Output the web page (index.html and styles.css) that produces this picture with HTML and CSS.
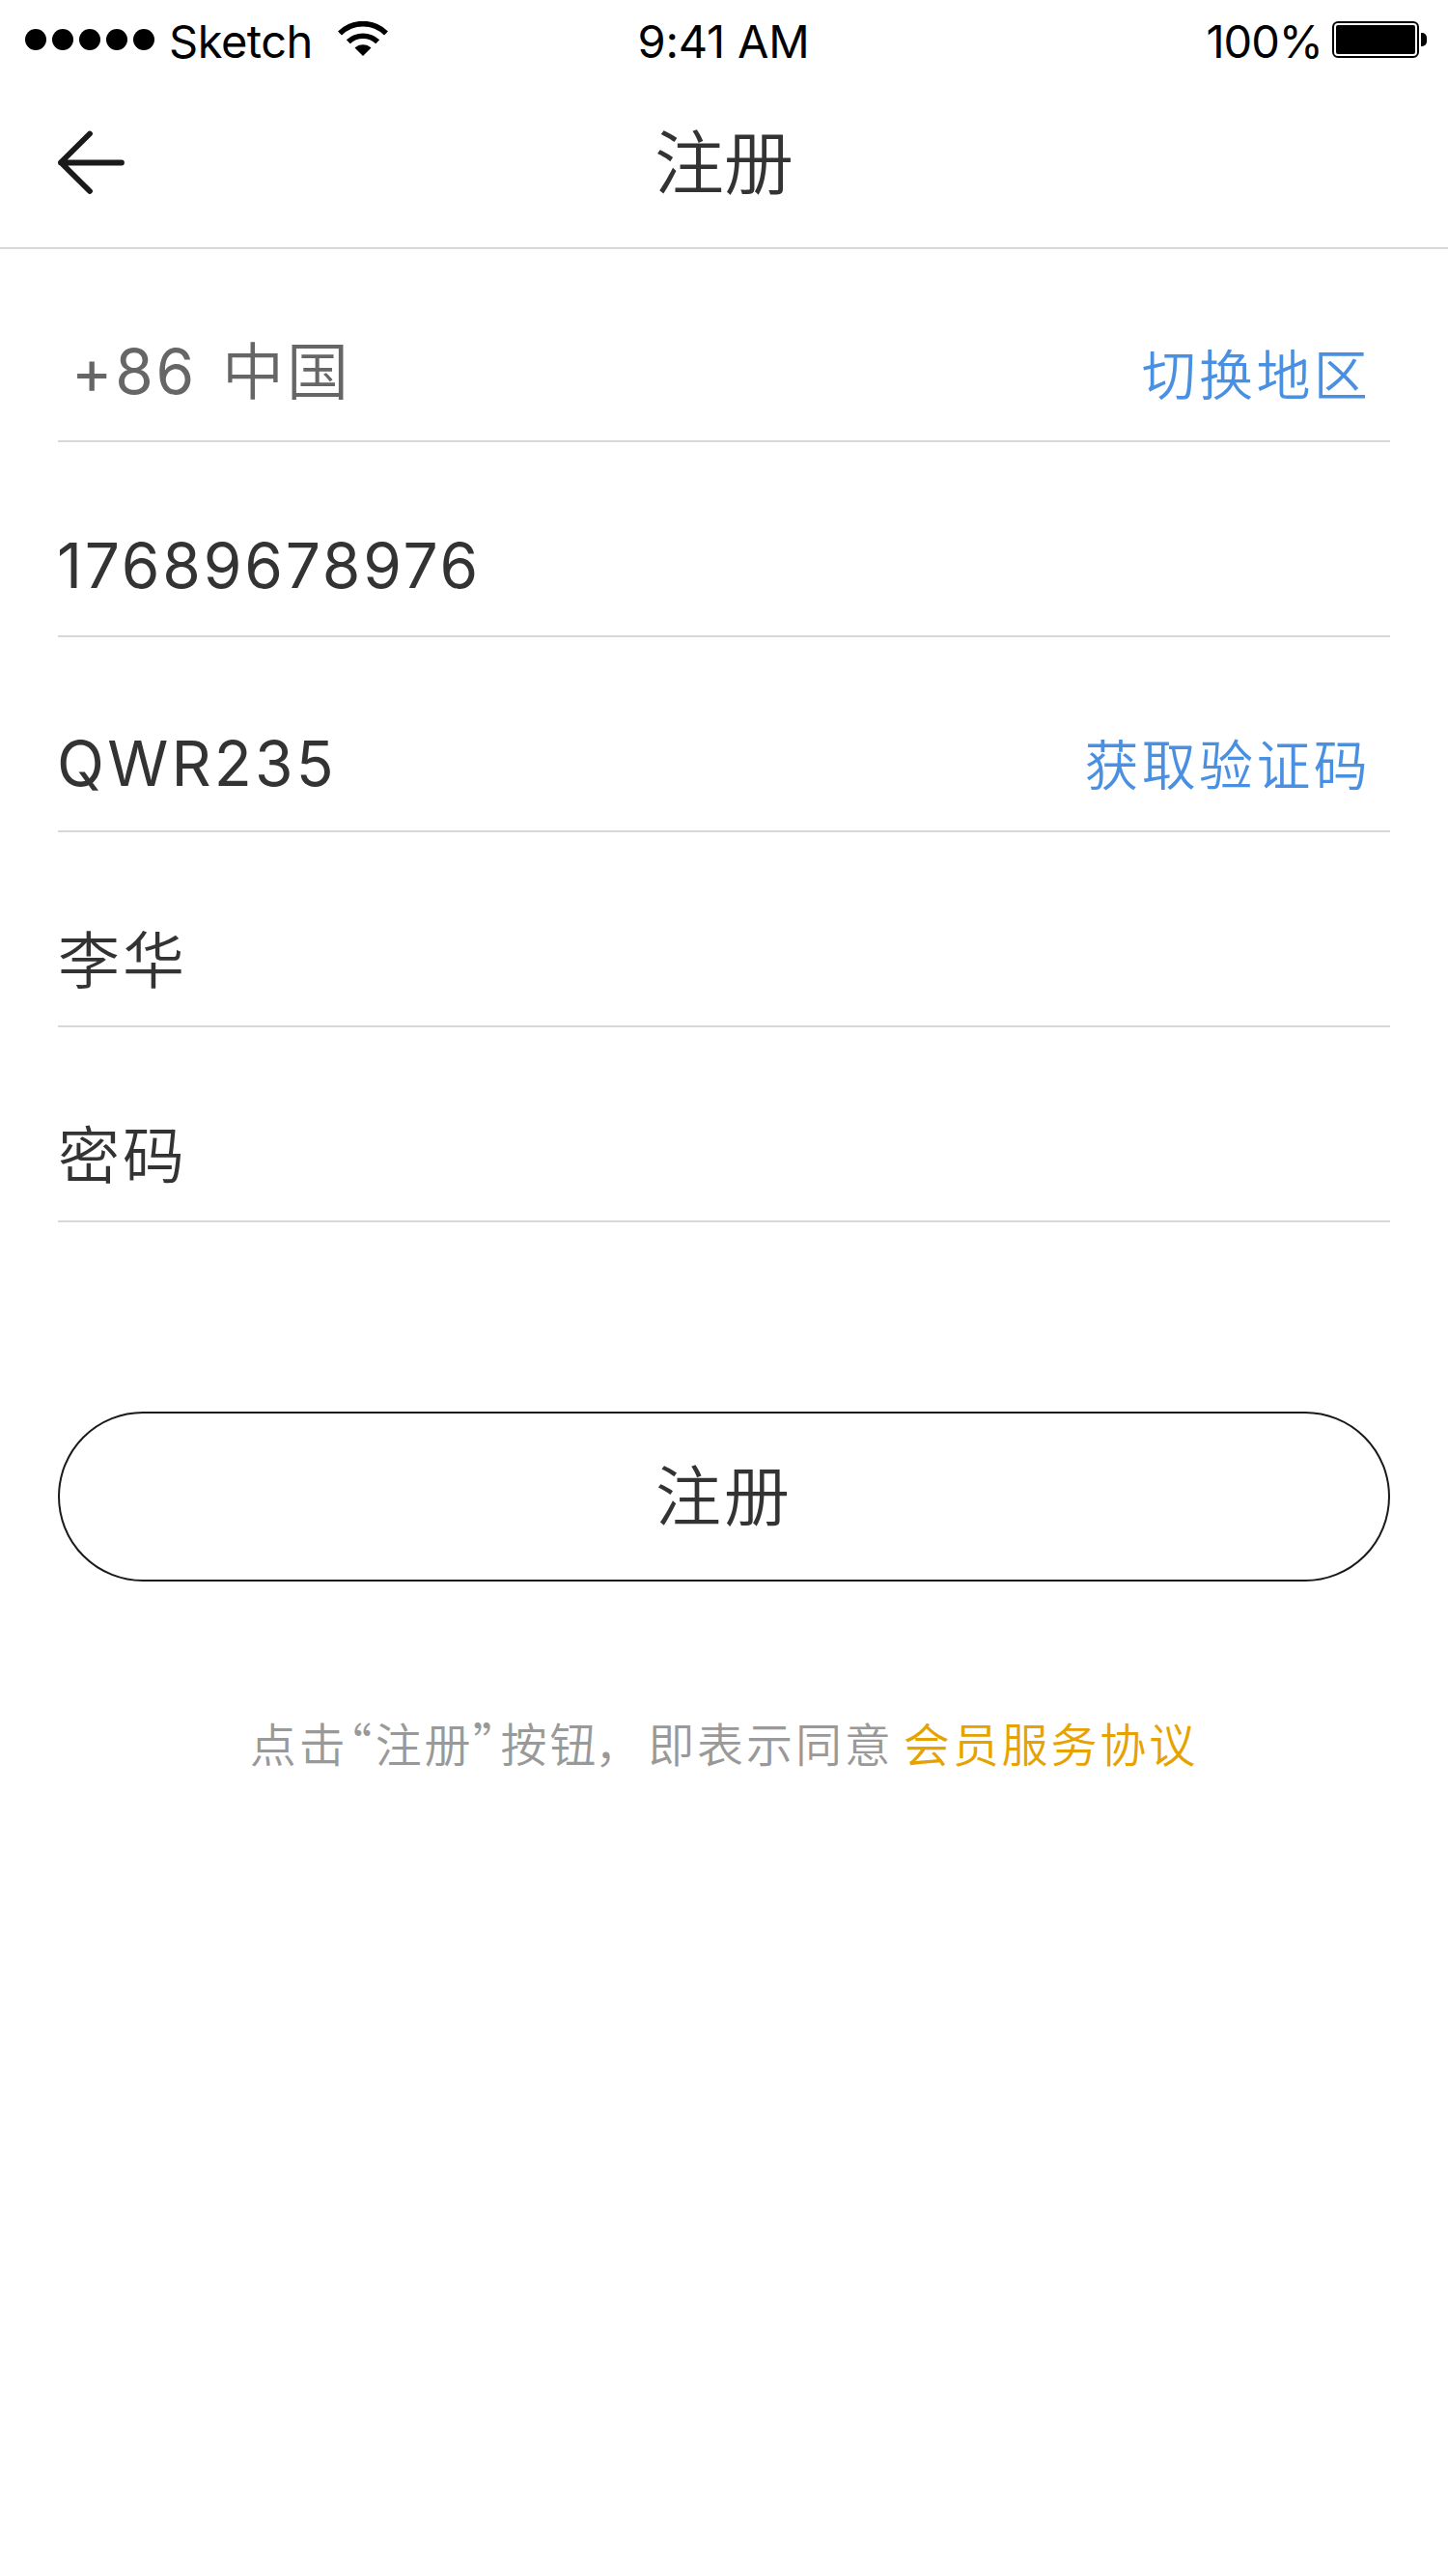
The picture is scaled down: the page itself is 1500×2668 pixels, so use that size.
FILE: index.html
```html
<!DOCTYPE html>
<html lang="zh-CN">
<head>
<meta charset="utf-8">
<title>注册</title>
<link rel="stylesheet" href="styles.css">
</head>
<body>
<header class="status">
  <div class="status-left">
    <svg class="signal" width="134" height="22" viewBox="0 0 134 22"><circle cx="11" cy="11" r="11"/><circle cx="39" cy="11" r="11"/><circle cx="67" cy="11" r="11"/><circle cx="95" cy="11" r="11"/><circle cx="123" cy="11" r="11"/></svg>
    <span class="carrier">Sketch</span>
    <svg class="wifi" width="52" height="36" viewBox="0 0 52 36"><path d="M2 12.5A34 34 0 0 1 50 12.5" fill="none" stroke="#000" stroke-width="5.6"/><path d="M10.8 21.3A22 22 0 0 1 41.2 21.3" fill="none" stroke="#000" stroke-width="5.6"/><path d="M17.5 27.5A12.5 12.5 0 0 1 34.5 27.5L26 36Z"/></svg>
  </div>
  <span class="clock">9:41 AM</span>
  <div class="status-right">
    <span class="charge">100%</span>
    <svg class="battery" width="98" height="38" viewBox="0 0 98 38"><rect x="1" y="1" width="88" height="36" rx="5" fill="none" stroke="#000" stroke-width="2"/><rect x="4" y="4" width="82" height="30" rx="2"/><path d="M92 12h1a5 5 0 0 1 5 5v4a5 5 0 0 1-5 5h-1z"/></svg>
  </div>
</header>
<nav class="nav">
  <svg class="back" width="70" height="66" viewBox="0 0 70 66"><path d="M33 3.5L3 33.2L33 63M3 33.5H66" fill="none" stroke="#1a1a1a" stroke-width="5.8" stroke-linecap="round" stroke-linejoin="round"/></svg>
  <h1 class="title">注册</h1>
  <span></span>
</nav>
<main class="form">
  <div class="field first"><span class="region"><span class="code">+86</span><span class="country">中国</span></span><a class="link">切换地区</a></div>
  <div class="field"><span class="phone">17689678976</span></div>
  <div class="field"><span class="captcha">QWR235</span><a class="link">获取验证码</a></div>
  <div class="field"><span>李华</span></div>
  <div class="field"><span>密码</span></div>
  <button class="submit">注册</button>
  <p class="terms"><span>点击<span class="quote">“</span>注册<span class="quote">”</span>按钮<span class="comma">，</span>即表示同意</span><a class="agreement">会员服务协议</a></p>
</main>
</body>
</html>
```
FILE: styles.css
```css
* { box-sizing: border-box; }
body {
  margin: 0;
  min-height: 2668px;
  background: #fff;
  color: #333;
  font-family: "Noto Sans CJK SC", sans-serif;
  font-weight: 350;
}
.status {
  display: grid;
  grid-template-columns: 1fr auto 1fr;
  height: 72px;
  padding: 0 22px 0 26px;
  color: #000;
  font: 400 47px/60px Inter, sans-serif;
}
.status-left, .status-right { display: flex; align-items: flex-start; }
.status-right { justify-content: flex-end; }
.carrier, .clock, .charge { margin-top: 13px; white-space: nowrap; }
.signal { margin-top: 30px; }
.carrier { margin-left: 15px; letter-spacing: -0.5px; }
.wifi { margin: 22px 0 0 26px; }
.clock { margin-right: 5px; letter-spacing: -0.2px; }
.charge { letter-spacing: -1px; }
.battery { margin: 22px 0 0 10px; }
.nav {
  display: grid;
  grid-template-columns: 1fr auto 1fr;
  align-items: center;
  height: 186px;
  padding: 0 60px;
  border-bottom: 2px solid #d8d8d8;
}
.back { margin-top: 8px; }
.title { margin: 0; font-size: 72px; font-weight: 350; line-height: 100px; }
.form { padding: 0 60px; }
.field {
  display: flex;
  justify-content: space-between;
  align-items: center;
  height: 202px;
  padding-top: 56px;
  border-bottom: 2px solid #d8d8d8;
  font-size: 64px;
  line-height: 90px;
  letter-spacing: 3px;
}
.first { height: 200px; padding-top: 54px; }
.region { display: flex; gap: 26px; padding-left: 14px; color: #666; }
.code, .phone, .captcha { font-family: Inter, sans-serif; font-weight: 400; }
.code { padding-top: 2px; letter-spacing: 2.8px; }
.country { margin-top: -3px; }
.phone { margin-left: -1px; letter-spacing: 2.8px; }
.captcha { padding-top: 6px; margin-left: -1px; letter-spacing: 3.2px; }
.link { padding: 2px 20px 0 0; color: #4a90e2; font-size: 56px; letter-spacing: 3.3px; }
.submit {
  display: block;
  width: 100%;
  height: 176px;
  margin-top: 196px;
  padding: 0 0 8px;
  border: 2px solid #1a1a1a;
  border-radius: 88px;
  background: none;
  color: #333;
  font: 350 68px/100px "Noto Sans CJK SC", sans-serif;
  letter-spacing: 3px;
}
.terms {
  display: flex;
  justify-content: center;
  gap: 10px;
  margin: 131px 0 0;
  color: #999;
  font-size: 48px;
  line-height: 70px;
  letter-spacing: 2.9px;
  white-space: nowrap;
}
.quote { font-feature-settings: "palt"; letter-spacing: 4px; }
.comma { margin: 0 4px 0 -4px; }
.agreement { color: #e6a200; }
```
